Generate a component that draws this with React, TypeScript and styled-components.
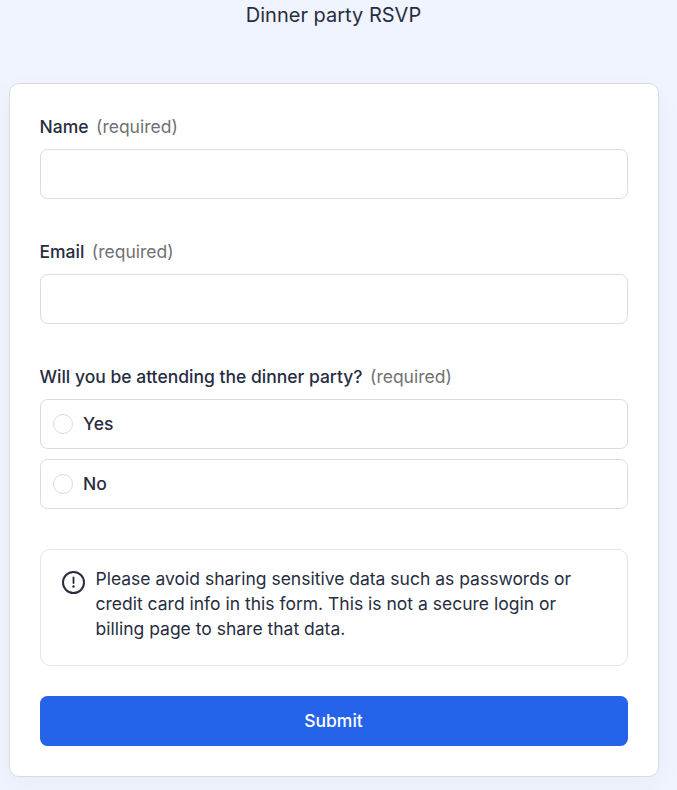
import React from "react";
import styled, { createGlobalStyle } from "styled-components";

const GlobalStyle = createGlobalStyle`
  *, *::before, *::after { box-sizing: border-box; }
  body {
    margin: 0;
    background: #f0f4ff;
    color: #272d3f;
    font-family: Inter, "Liberation Sans", sans-serif;
    overflow: hidden;
  }
`;

const Page = styled.main`
  width: 677px;
  height: 790px;
  padding: 0 18px 0 9px;
  overflow: hidden;
`;

const Title = styled.h1`
  margin: 0;
  padding-right: 1px;
  height: 83px;
  font-size: 20px;
  line-height: 30px;
  font-weight: 400;
  text-align: center;
`;

const Card = styled.form`
  height: 694px;
  padding: 30px;
  background: #fff;
  border: 1px solid #d9dbe1;
  border-radius: 10px;
  box-shadow: 0 10px 30px rgba(31, 41, 55, 0.04);
`;

const Field = styled.div`
  display: flex;
  flex-direction: column;
  margin-bottom: 40px;
`;

const Label = styled.label`
  height: 35px;
  margin-left: -0.5px;
  font-size: 17.5px;
  line-height: 25px;
  font-weight: 500;
`;

const Required = styled.span`
  margin-left: 7.5px;
  font-weight: 400;
  color: #717171;
`;

const Input = styled.input`
  height: 50px;
  border: 1px solid #dadbdf;
  border-radius: 7.5px;
  background: #fff;
`;

const Options = styled.div`
  display: grid;
  gap: 10px;
`;

const Option = styled.label`
  display: flex;
  align-items: center;
  gap: 10px;
  height: 50px;
  padding: 0 12px;
  border: 1px solid #dadbdf;
  border-radius: 7.5px;
  font-size: 17.5px;
  line-height: 25px;
  font-weight: 500;
`;

const OptionText = styled.span`
  padding-bottom: 2px;
`;

const Radio = styled.input`
  appearance: none;
  width: 20px;
  height: 20px;
  margin: 0;
  border: 1px solid #dadbdf;
  border-radius: 50%;
`;

const Notice = styled.aside`
  display: flex;
  gap: 9.5px;
  height: 117px;
  margin-bottom: 30px;
  padding: 16px 20px;
  border: 1px solid #e5e6e9;
  border-radius: 10px;
`;

const NoticeIcon = styled.svg`
  flex: none;
  width: 25px;
  height: 25px;
  margin-top: 4px;
`;

const NoticeText = styled.p`
  margin: 0;
  font-size: 17.5px;
  line-height: 25px;
`;

const Submit = styled.button`
  width: 100%;
  height: 50px;
  padding: 0 1px 2px 0;
  border: 0;
  border-radius: 7.5px;
  background: #2563eb;
  color: #fff;
  font: 500 17.5px/25px Inter, "Liberation Sans", sans-serif;
`;

const FieldLabel = ({ text, id }: { text: string; id?: string }) => (
  <Label htmlFor={id}>
    {text}
    <Required>(required)</Required>
  </Label>
);

export default function App() {
  return (
    <Page>
      <GlobalStyle />
      <Title>Dinner party RSVP</Title>
      <Card>
        <Field>
          <FieldLabel text="Name" id="name" />
          <Input id="name" />
        </Field>
        <Field>
          <FieldLabel text="Email" id="email" />
          <Input id="email" type="email" />
        </Field>
        <Field>
          <FieldLabel text="Will you be attending the dinner party?" />
          <Options>
            <Option>
              <Radio type="radio" name="attending" />
              <OptionText>Yes</OptionText>
            </Option>
            <Option>
              <Radio type="radio" name="attending" />
              <OptionText>No</OptionText>
            </Option>
          </Options>
        </Field>
        <Notice>
          <NoticeIcon viewBox="0 0 25 25" fill="none" stroke="#272d3f">
            <circle cx="12.5" cy="12.5" r="10.5" strokeWidth="2" />
            <path d="M12.5 7.5v5.5" strokeWidth="1.8" strokeLinecap="round" />
            <circle cx="12.5" cy="16.5" r="1.2" fill="#272d3f" stroke="none" />
          </NoticeIcon>
          <NoticeText>
            Please avoid sharing sensitive data such as passwords or<br />
            credit card info in this form. This is not a secure login or<br />
            billing page to share that data.
          </NoticeText>
        </Notice>
        <Submit type="button">Submit</Submit>
      </Card>
    </Page>
  );
}
